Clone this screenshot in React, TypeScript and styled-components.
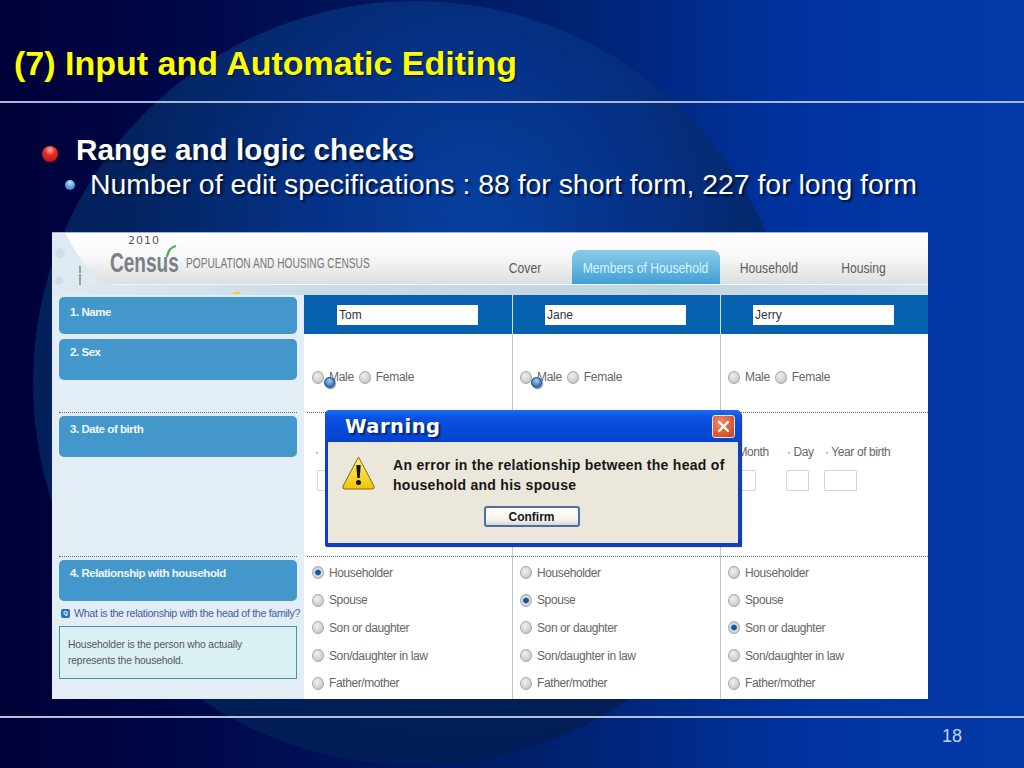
import React from "react";
import styled, { createGlobalStyle } from "styled-components";

const Global = createGlobalStyle`
  html, body { margin: 0; padding: 0; width: 1024px; height: 768px; overflow: hidden; background: #000040; }
  * { box-sizing: border-box; }
`;

const Slide = styled.div`
  position: relative;
  width: 1024px;
  height: 768px;
  overflow: hidden;
  font-family: "Liberation Sans", Arial, sans-serif;
  background: linear-gradient(90deg, #000038 0%, #000a4c 22%, #00226f 55%, #0033a0 78%, #0339a8 100%);
  &::before {
    content: "";
    position: absolute;
    left: 33px;
    top: 1px;
    width: 764px;
    height: 764px;
    border-radius: 50%;
    background: radial-gradient(circle at 58% 28%, #07409f 0, #053288 22%, #03235e 50%, #021850 100%);
  }
`;

const Layer = styled.div`
  position: relative;
  display: flex;
  flex-direction: column;
  height: 100%;
`;

const TitleBar = styled.header`
  height: 103px;
  padding: 44px 0 0 14px;
  border-bottom: 2px solid #a8b8dc;
`;

const Title = styled.h1`
  margin: 0;
  font-size: 34px;
  line-height: 38px;
  font-weight: 700;
  color: #ffff00;
  text-shadow: 1px 1px 1px #00103a;
`;

const Bullets = styled.div`
  height: 129px;
  padding-top: 29px;
`;

const TopBullet = styled.div`
  display: flex;
  align-items: center;
  height: 36px;
  padding-left: 42px;
  font-size: 29.7px;
  font-weight: 700;
  color: #fff;
  text-shadow: 2px 2px 2px #001030;
`;

const RedBall = styled.span`
  flex: none;
  width: 16px;
  height: 16px;
  margin: 7px 18px 0 0;
  border-radius: 50%;
  background: radial-gradient(circle at 50% 25%, #ffb0a8 0, #e83028 35%, #a80c10 100%);
`;

const SubBullet = styled.div`
  display: flex;
  align-items: center;
  height: 32px;
  padding-left: 65px;
  font-size: 28.4px;
  color: #fff;
  white-space: nowrap;
  text-shadow: 2px 2px 2px #001030;
`;

const BlueBall = styled.span`
  flex: none;
  width: 10px;
  height: 10px;
  margin: 2px 15px 0 0;
  border-radius: 50%;
  background: radial-gradient(circle at 50% 25%, #c0e4ff 0, #5aa8ea 50%, #2a70c0 100%);
`;

const Form = styled.section`
  position: relative;
  align-self: flex-start;
  width: 876px;
  height: 467px;
  margin-left: 52px;
  background: #fff;
  border-top: 1px solid #9fb4d8;
  overflow: hidden;
`;

const FormHeader = styled.div`
  position: relative;
  display: flex;
  align-items: flex-end;
  height: 52px;
  background: linear-gradient(180deg, #ffffff 0%, #f8f8f8 45%, #dcdfe0 100%);
  border-bottom: 1px solid #f4f6f7;
`;

const HeaderCurve = styled.svg`
  position: absolute;
  left: 0;
  top: 0;
`;

const Logo = styled.div`
  position: relative;
  display: flex;
  align-items: flex-end;
  height: 52px;
  margin-left: 58px;
  padding-bottom: 13px;
`;

const LogoYear = styled.span`
  position: absolute;
  left: 18px;
  top: 4px;
  font-family: "DejaVu Sans", sans-serif;
  font-size: 11px;
  line-height: 10px;
  letter-spacing: 1px;
  color: #555;
`;

const LogoWord = styled.span`
  display: inline-block;
  width: 68px;
  margin-bottom: -2px;
  font-size: 28px;
  line-height: 21px;
  font-weight: 700;
  color: #7b8086;
  transform: scaleX(0.68);
  transform-origin: left center;
`;

const LogoArc = styled.svg`
  position: absolute;
  left: 55px;
  top: 12px;
`;

const LogoTag = styled.span`
  display: inline-block;
  width: 0;
  margin-left: 8px;
  font-size: 14px;
  line-height: 15px;
  white-space: nowrap;
  color: #777;
  transform: scaleX(0.725);
  transform-origin: left center;
`;

const Tabs = styled.nav`
  display: flex;
  align-items: flex-end;
  margin-left: auto;
  padding-right: 18px;
`;

const Tab = styled.div<{ $w: number; $active?: boolean }>`
  display: flex;
  align-items: center;
  justify-content: center;
  width: ${(p) => p.$w}px;
  height: 34px;
  border-radius: 8px 8px 0 0;
  background: ${(p) => (p.$active ? "linear-gradient(180deg, #8ccbe8 0%, #62b4e0 55%, #3f9fd6 100%)" : "transparent")};
  color: ${(p) => (p.$active ? "#dff3fb" : "#5c5c5c")};
  font-size: 15px;
  white-space: nowrap;
`;

const TabText = styled.span`
  display: inline-block;
  transform: scaleX(0.81);
`;

const Strip = styled.div`
  display: flex;
  align-items: flex-end;
  height: 10px;
  background: linear-gradient(90deg, #dfeaf3 0%, #cbdbe6 30%, #c2d4e0 70%, #d6e2ea 100%);
`;

const StripMark = styled.span`
  width: 7px;
  height: 2px;
  margin: 0 0 1px 181px;
  background: #f0d040;
`;

const Grid = styled.div`
  display: grid;
  grid-template-columns: 252px 208px 208px 208px;
  grid-template-rows: 39px 79px 144px 142px;
`;

const LabelCell = styled.div<{ $top: number; $dotted?: boolean }>`
  position: relative;
  padding: ${(p) => p.$top}px 7px 0;
  background: #e3edf5;
  ${(p) => p.$dotted && `
    &::after {
      content: "";
      position: absolute;
      left: 7px;
      right: 7px;
      bottom: 0;
      border-bottom: 1px dotted #666;
    }
  `}
`;

const LabelBox = styled.div<{ $h: number; $pt: number }>`
  height: ${(p) => p.$h}px;
  padding: ${(p) => p.$pt}px 11px 0;
  border-radius: 5px;
  background: #4497cb;
  color: #f0f8fc;
  font-size: 11.5px;
  line-height: 13px;
  font-weight: 700;
  letter-spacing: -0.45px;
`;

const NameCell = styled.div`
  display: flex;
  align-items: center;
  padding-left: 32px;
  background: #0560ae;
  border-left: 1px solid #cfe0ee;
  &:nth-child(2) { border-left: 0; padding-left: 33px; }
`;

const NameInput = styled.div`
  width: 141px;
  height: 20px;
  padding-left: 2px;
  background: #fff;
  color: #333;
  font-size: 12px;
  line-height: 20px;
`;

const Cell = styled.div<{ $first?: boolean; $dotted?: boolean; $pad?: number }>`
  position: relative;
  padding: ${(p) => p.$pad ?? 0}px 0 0 ${(p) => (p.$first ? 8 : 7)}px;
  background-color: #fff;
  border-left: ${(p) => (p.$first ? "0" : "1px solid #c4c4c4")};
  ${(p) => p.$dotted && `
    &::after {
      content: "";
      position: absolute;
      left: ${p.$first ? 3 : 0}px;
      right: 0;
      bottom: 0;
      border-bottom: 1px dotted #666;
    }
  `}
`;

const Radios = styled.div`
  display: flex;
  align-items: center;
  height: 22px;
  color: #666;
  font-size: 12px;
  letter-spacing: -0.3px;
`;

const RadioColumn = styled.div`
  display: flex;
  flex-direction: column;
`;

const RadioRow = styled.div`
  display: flex;
  align-items: center;
  height: 27.6px;
  color: #666;
  font-size: 12px;
  letter-spacing: -0.4px;
  white-space: nowrap;
`;

const Radio = styled.span<{ $checked?: boolean; $mr?: number }>`
  flex: none;
  width: 12px;
  height: 13px;
  margin-right: ${(p) => p.$mr ?? 5}px;
  border-radius: 50%;
  border: 1px solid #a8a8a8;
  background: ${(p) =>
    p.$checked
      ? "radial-gradient(circle, #0a4c8c 0, #1f6aa8 35%, #e0e0e0 45%, #b4b4b4 100%)"
      : "radial-gradient(circle at 40% 35%, #f0f0f0 0, #d2d2d2 60%, #aaaaaa 100%)"};
`;

const RadioText = styled.span<{ $mr?: number }>`
  margin-right: ${(p) => p.$mr ?? 0}px;
`;

const DateLabels = styled.div`
  display: flex;
  height: 14px;
  color: #666;
  font-size: 12px;
  line-height: 14px;
  letter-spacing: -0.4px;
  white-space: nowrap;
`;

const DateLabel = styled.span<{ $w: number }>`
  width: ${(p) => p.$w}px;
`;

const DateInputs = styled.div`
  display: flex;
  gap: 15px;
  margin: 11px 0 0 5px;
`;

const DateInput = styled.span<{ $w: number; $mr?: number }>`
  width: ${(p) => p.$w}px;
  height: 21px;
  margin-right: ${(p) => p.$mr ?? 0}px;
  border: 1px solid #d4d4d4;
  border-radius: 1px;
  background: #fff;
`;

const Question = styled.div`
  display: flex;
  align-items: center;
  height: 18px;
  margin-top: 3px;
  margin-right: -10px;
  color: #3f5f9e;
  font-size: 10.7px;
  letter-spacing: -0.34px;
  white-space: nowrap;
`;

const QIcon = styled.span`
  display: flex;
  align-items: center;
  justify-content: center;
  flex: none;
  width: 9px;
  height: 9px;
  margin: 0 4px 0 2px;
  border-radius: 2px;
  background: #2a6fc8;
  color: #fff;
  font-size: 6px;
  font-weight: 700;
`;

const HelpBox = styled.div`
  height: 53px;
  margin-top: 4px;
  padding: 10px 8px 0;
  border: 1px solid #4a92ac;
  background: #d9f1f3;
  color: #555;
  font-size: 10.3px;
  line-height: 16px;
  letter-spacing: -0.15px;
`;

const Marker = styled.span<{ $left: number }>`
  position: absolute;
  left: ${(p) => p.$left}px;
  top: 144px;
  width: 11px;
  height: 11px;
  border-radius: 50%;
  border: 1.5px solid #1d3f7a;
  background: radial-gradient(circle at 50% 30%, #9ad0f4 0, #3f86c8 60%, #2a5ea0 100%);
  box-shadow: 1px 1px 1px rgba(0, 0, 30, 0.5);
`;

const Dialog = styled.div`
  position: absolute;
  left: 273px;
  top: 177px;
  width: 416px;
  height: 136px;
  display: flex;
  flex-direction: column;
  border-radius: 5px 5px 0 0;
  border: 3px solid #0a3fc6;
  border-top: 0;
  background: #0a3fc6;
  box-shadow: 1px 1px 1px #0a2a80;
`;

const DialogTitle = styled.div`
  display: flex;
  align-items: center;
  justify-content: space-between;
  flex: none;
  height: 32px;
  padding: 0 3px 0 20px;
  background: linear-gradient(180deg, #1c6cf0 0%, #0a50e0 25%, #0544d0 100%);
  border-radius: 5px 5px 0 0;
  margin: 0 -3px;
  color: #fff;
  font-family: "DejaVu Sans", sans-serif;
  font-size: 19.5px;
  font-weight: 700;
  letter-spacing: 0.5px;
  text-shadow: 2px 2px 1px #08257a;
`;

const CloseButton = styled.span`
  display: flex;
  align-items: center;
  justify-content: center;
  width: 23px;
  height: 23px;
  margin-right: 3px;
  border: 1px solid #f0e4e0;
  border-radius: 3px;
  background: radial-gradient(circle at 35% 30%, #f08a68 0, #dc5a34 60%, #c03f20 100%);
`;

const DialogBody = styled.div`
  flex: 1;
  display: flex;
  flex-direction: column;
  background: #ebe7da;
`;

const MessageRow = styled.div`
  display: flex;
  padding: 13px 0 0 13px;
`;

const WarnIcon = styled.svg`
  flex: none;
  margin: 0 17px 0 0;
`;

const Message = styled.p`
  margin: 0;
  color: #161616;
  font-size: 14px;
  line-height: 20px;
  font-weight: 700;
  letter-spacing: 0.28px;
  white-space: nowrap;
`;

const ConfirmButton = styled.span`
  align-self: center;
  display: flex;
  align-items: center;
  justify-content: center;
  width: 96px;
  height: 21px;
  margin: 11px 0 0 -3px;
  border: 2px solid #4a6ea8;
  border-radius: 3px;
  background: linear-gradient(180deg, #ffffff 0%, #f4f3ee 70%, #dcd8cc 100%);
  color: #161616;
  font-size: 12px;
  font-weight: 700;
`;

const Footer = styled.footer`
  display: flex;
  justify-content: flex-end;
  margin-top: 17px;
  padding: 8px 62px 0 0;
  border-top: 2px solid #b4c0dc;
  color: #c4d4f0;
  font-size: 18px;
  line-height: 20px;
`;

const names = ["Tom", "Jane", "Jerry"];
const relations = ["Householder", "Spouse", "Son or daughter", "Son/daughter in law", "Father/mother"];
const checked = [0, 1, 2];

export default function App() {
  return (
    <Slide>
      <Global />
      <Layer>
        <TitleBar>
          <Title>(7) Input and Automatic Editing</Title>
        </TitleBar>
        <Bullets>
          <TopBullet>
            <RedBall />
            Range and logic checks
          </TopBullet>
          <SubBullet>
            <BlueBall />
            Number of edit specifications : 88 for short form, 227 for long form
          </SubBullet>
        </Bullets>
        <Form>
          <FormHeader>
            <HeaderCurve width="120" height="52" viewBox="0 0 120 52">
              <path d="M0 0H13C24 18 38 50 64 52H0Z" fill="#dfe9f2" />
              <path d="M28 33v5M27 39h2M28 41v11" stroke="#7d8b70" strokeWidth="1.5" fill="none" />
              <circle cx="8" cy="20" r="5" fill="#cfdcea" />
              <circle cx="7" cy="48" r="4" fill="#cfdcea" />
            </HeaderCurve>
            <Logo>
              <LogoYear>2010</LogoYear>
              <LogoWord>Census</LogoWord>
              <LogoArc width="14" height="14" viewBox="0 0 14 14">
                <path d="M2 13C3 7 6 3 11 2" stroke="#4fae4a" strokeWidth="2.2" fill="none" />
              </LogoArc>
              <LogoTag>POPULATION AND HOUSING CENSUS</LogoTag>
            </Logo>
            <Tabs>
              <Tab $w={94}><TabText>Cover</TabText></Tab>
              <Tab $w={148} $active><TabText>Members of Household</TabText></Tab>
              <Tab $w={98}><TabText>Household</TabText></Tab>
              <Tab $w={92}><TabText>Housing</TabText></Tab>
            </Tabs>
          </FormHeader>
          <Strip><StripMark /></Strip>
          <Grid>
            <LabelCell $top={2}><LabelBox $h={37} $pt={9}>1. Name</LabelBox></LabelCell>
            {names.map((n) => (
              <NameCell key={n}><NameInput>{n}</NameInput></NameCell>
            ))}

            <LabelCell $top={5} $dotted><LabelBox $h={41} $pt={7}>2. Sex</LabelBox></LabelCell>
            {names.map((n, i) => (
              <Cell key={n} $first={i === 0} $dotted $pad={32}>
                <Radios>
                  <Radio />
                  <RadioText $mr={5}>Male</RadioText>
                  <Radio />
                  <RadioText>Female</RadioText>
                </Radios>
              </Cell>
            ))}

            <LabelCell $top={3} $dotted><LabelBox $h={41} $pt={7}>3. Date of birth</LabelBox></LabelCell>
            <Cell $first $dotted $pad={32}>
              <DateLabels>
                <DateLabel $w={12}>&nbsp;·</DateLabel>
              </DateLabels>
              <DateInputs>
                <DateInput $w={23} />
              </DateInputs>
            </Cell>
            <Cell $dotted />
            <Cell $dotted $pad={32}>
              <DateLabels>
                <DateLabel $w={59}>&nbsp;· Month</DateLabel>
                <DateLabel $w={38}>· Day</DateLabel>
                <DateLabel $w={80}>· Year of birth</DateLabel>
              </DateLabels>
              <DateInputs>
                <DateInput $w={23} $mr={15} />
                <DateInput $w={23} />
                <DateInput $w={33} />
              </DateInputs>
            </Cell>

            <LabelCell $top={3}>
              <LabelBox $h={41} $pt={7}>4. Relationship with household</LabelBox>
              <Question>
                <QIcon>Q</QIcon>
                What is the relationship with the head of the family?
              </Question>
              <HelpBox>
                Householder is the person who actually
                <br />
                represents the household.
              </HelpBox>
            </LabelCell>
            {names.map((n, i) => (
              <Cell key={n} $first={i === 0} $pad={2}>
                <RadioColumn>
                  {relations.map((r, j) => (
                    <RadioRow key={r}>
                      <Radio $checked={checked[i] === j} />
                      <RadioText>{r}</RadioText>
                    </RadioRow>
                  ))}
                </RadioColumn>
              </Cell>
            ))}
          </Grid>
          <Marker $left={272} />
          <Marker $left={479} />
          <Dialog>
            <DialogTitle>
              Warning
              <CloseButton>
                <svg width="13" height="13" viewBox="0 0 13 13">
                  <path d="M2 2l9 9M11 2l-9 9" stroke="#fff" strokeWidth="2.4" strokeLinecap="round" />
                </svg>
              </CloseButton>
            </DialogTitle>
            <DialogBody>
              <MessageRow>
                <WarnIcon width="35" height="36" viewBox="0 0 35 36">
                  <defs>
                    <linearGradient id="warn" x1="0" y1="0" x2="0" y2="1">
                      <stop offset="0" stopColor="#fff27a" />
                      <stop offset="1" stopColor="#f2c400" />
                    </linearGradient>
                  </defs>
                  <path d="M17.5 2L33 31q1 3-2 3H4q-3 0-2-3Z" fill="url(#warn)" stroke="#7a6a20" strokeWidth="1" />
                  <path d="M15.3 10h4.4l-1 13h-2.4Z" fill="#111" />
                  <circle cx="17.5" cy="27.5" r="2.5" fill="#111" />
                </WarnIcon>
                <Message>
                  An error in the relationship between the head of
                  <br />
                  household and his spouse
                </Message>
              </MessageRow>
              <ConfirmButton>Confirm</ConfirmButton>
            </DialogBody>
          </Dialog>
        </Form>
        <Footer>18</Footer>
      </Layer>
    </Slide>
  );
}
